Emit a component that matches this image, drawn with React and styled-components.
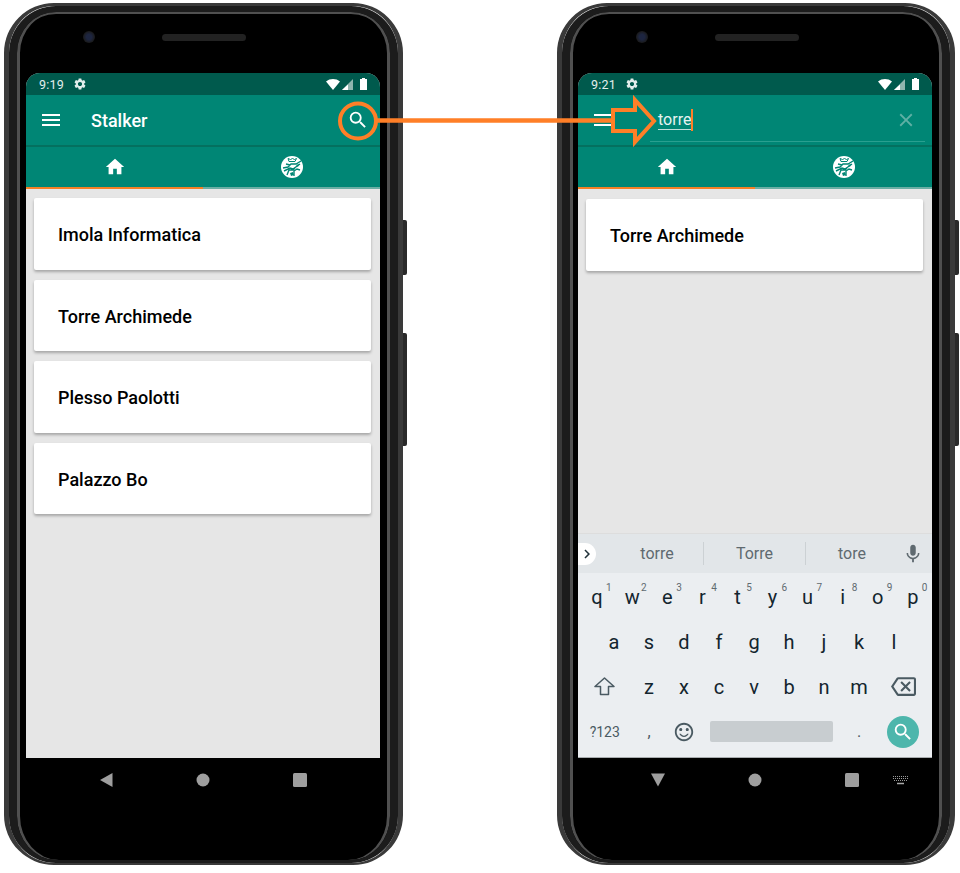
import styled, { createGlobalStyle } from 'styled-components';
import {
	MdMenu,
	MdSearch,
	MdClose,
	MdHome,
	MdSettings,
	MdMic,
	MdKeyboardArrowRight,
	MdOutlineBackspace,
	MdSentimentSatisfiedAlt,
} from 'react-icons/md';

const GlobalStyle = createGlobalStyle`
	html, body {
		margin: 0;
		padding: 0;
		background: #fff;
		font-family: Roboto, "Liberation Sans", sans-serif;
	}
`;

const Page = styled.div`
	position: relative;
	width: 960px;
	height: 873px;
	padding: 3px 0 0 4px;
	box-sizing: border-box;
	display: flex;
	align-items: flex-start;
	gap: 154px;
	overflow: hidden;
`;

const Phone = styled.div`
	width: ${(p) => p.$width}px;
	height: 862px;
	flex: none;
	box-sizing: border-box;
	display: flex;
	border-style: solid;
	border-color: #3a3a3a;
	border-width: 3px 5px 2px;
	border-radius: 50px;
`;

const Bezel = styled.div`
	position: relative;
	flex: 1;
	box-sizing: border-box;
	padding: 61px 10px 0 ${(p) => p.$left}px;
	background: #000;
	border-style: solid;
	border-color: #1c1c1c;
	border-width: 6px 8px 3px;
	border-radius: 47px;
	box-shadow:
		inset 3px 0 0 #505050,
		inset -3px 0 0 #505050,
		inset 0 2px 0 #505050;
`;

const SideButton = styled.div`
	position: absolute;
	right: -17px;
	top: ${(p) => p.$top}px;
	width: 4px;
	height: ${(p) => p.$height}px;
	background: #2a2a2a;
	border-radius: 0 2px 2px 0;
`;

const Camera = styled.div`
	position: absolute;
	left: 66px;
	top: 19px;
	width: 12px;
	height: 12px;
	border-radius: 50%;
	background: radial-gradient(circle, #1d2540 0 30%, #1a1a1a 70%);
`;

const Speaker = styled.div`
	position: absolute;
	left: 145px;
	top: 22px;
	width: 84px;
	height: 7px;
	border-radius: 4px;
	background: #222;
`;

const Screen = styled.div`
	height: 685px;
	display: flex;
	flex-direction: column;
	position: relative;
	background: #e6e6e6;
	border-radius: 14px 14px 0 0;
	overflow: hidden;
`;

const StatusBar = styled.div`
	height: 22px;
	flex: none;
	display: flex;
	align-items: center;
	gap: 9px;
	padding: 0 13px;
	background: #005a4d;
	color: #e3eeec;
	font-size: 12.5px;
	letter-spacing: 0.2px;
`;

const StatusRight = styled.div`
	margin-left: auto;
	display: flex;
	align-items: center;
	gap: 2px;
`;

const BatteryIcon = styled.svg`
	margin-left: 5px;
`;

const AppBar = styled.div`
	height: 52px;
	flex: none;
	box-sizing: border-box;
	display: flex;
	align-items: center;
	padding: 0 ${(p) => p.$right}px 0 13px;
	background: #008675;
	color: #fff;
	border-bottom: 2px solid #04705f;
`;

const Title = styled.div`
	margin-left: 28px;
	font-size: 18px;
	font-weight: 500;
`;

const BarAction = styled.div`
	margin-left: auto;
	display: flex;
	color: ${(p) => p.$color || '#fff'};
`;

const SearchField = styled.div`
	flex: 1;
	align-self: stretch;
	margin: 0 0 3px 35px;
	padding: 4px 8px 0;
	display: flex;
	align-items: center;
	border-bottom: 1px solid #2a9f8f;
`;

const SearchText = styled.span`
	font-size: 16px;
	line-height: 18px;
	color: #e6f3f1;
	border-bottom: 1px solid #bfe0da;
`;

const Caret = styled.span`
	width: 2px;
	height: 22px;
	background: #ff7f27;
`;

const Tabs = styled.div`
	height: 42px;
	flex: none;
	display: flex;
	background: #008675;
`;

const Tab = styled.div`
	flex: 1;
	display: flex;
	align-items: center;
	justify-content: center;
	color: #fff;
	border-bottom: 2px solid ${(p) => (p.$active ? '#f58025' : '#6aaea4')};
	box-sizing: border-box;
`;

const Cards = styled.div`
	flex: 1;
	display: flex;
	flex-direction: column;
	gap: 10px;
	padding: ${(p) => p.$top}px 9px 0 8px;
`;

const Card = styled.div`
	height: 71.5px;
	flex: none;
	box-sizing: border-box;
	display: flex;
	align-items: center;
	padding: 2px 0 0 24px;
	background: #fff;
	border-radius: 2px;
	box-shadow: 0 2px 3px rgba(0, 0, 0, 0.28);
	color: #000;
	font-size: 18px;
	font-weight: 500;
`;

const Keyboard = styled.div`
	flex: none;
	height: 225px;
	display: flex;
	flex-direction: column;
	background: #ebeef1;
	border-top: 1px solid #ddd;
	border-bottom: 1px solid #a8acae;
	box-sizing: border-box;
`;

const Suggestions = styled.div`
	height: 39px;
	flex: none;
	display: flex;
	align-items: center;
	margin-bottom: 1px;
	background: #e2e6e9;
	color: #5f6a70;
	font-size: 16px;
`;

const Expand = styled.div`
	width: 18px;
	height: 22px;
	flex: none;
	display: flex;
	align-items: center;
	justify-content: center;
	background: #fff;
	color: #22323a;
	border-radius: 0 11px 11px 0;
`;

const Suggestion = styled.div`
	width: ${(p) => p.$width}px;
	box-sizing: border-box;
	padding-left: ${(p) => p.$pad || 0}px;
	padding-top: 1px;
	text-align: center;
	border-right: ${(p) => (p.$last ? 'none' : '1px solid #ccd1d4')};
	line-height: 22px;
`;

const Mic = styled.div`
	margin-left: auto;
	margin-right: 8px;
	display: flex;
	color: #5f6a70;
`;

const KeyRow = styled.div`
	height: 45px;
	flex: none;
	display: flex;
	align-items: center;
	padding-left: ${(p) => p.$inset || 0}px;
`;

const Key = styled.div`
	position: relative;
	width: ${(p) => p.$width || 35}px;
	flex: none;
	display: flex;
	align-items: center;
	justify-content: center;
	color: ${(p) => p.$color || '#13252e'};
	font-size: ${(p) => p.$size || 20}px;
`;

const Digit = styled.span`
	position: absolute;
	right: 3px;
	top: -3px;
	font-size: 10px;
	color: #5f6a70;
`;

const SpaceBar = styled.div`
	width: 123px;
	height: 21px;
	background: #c8cdd0;
	border-radius: 2px;
`;

const SearchKey = styled.div`
	width: 32px;
	height: 32px;
	border-radius: 50%;
	background: #4db6ac;
	color: #fff;
	display: flex;
	align-items: center;
	justify-content: center;
`;

const NavBar = styled.div`
	position: relative;
	display: flex;
	justify-content: center;
	align-items: center;
	height: 44px;
	color: #9e9e9e;
`;

const NavSlot = styled.div`
	width: 97px;
	display: flex;
	justify-content: center;
`;

const ImeSwitch = styled.svg`
	position: absolute;
	right: 24px;
	top: 18px;
`;

const Annotation = styled.svg`
	position: absolute;
	left: 0;
	top: 0;
	pointer-events: none;
`;

const Wifi = () => (
	<svg width="14" height="11" viewBox="0 0 14 11">
		<path d="M0 2.500C4-.8 10-.8 14 2.500L7 11z" fill="#fff" />
	</svg>
);

const Signal = () => (
	<svg width="11" height="11" viewBox="0 0 11 11">
		<path d="M11 0V11H0z" fill="#8fb5ae" />
		<path d="M6 5.500V11H0z" fill="#fff" />
	</svg>
);

const Battery = () => (
	<BatteryIcon width="7" height="12" viewBox="0 0 7 12">
		<path d="M2 0h3v1h2v11H0V1h2z" fill="#fff" />
	</BatteryIcon>
);

// hat-and-coat figure of the Stalker logo, small and scratchy
const LogoIcon = () => (
	<svg width="22" height="22" viewBox="0 0 22 22">
		<circle cx="11" cy="11" r="11" fill="#fff" />
		<path d="M7 2.500l1 3h6l1.500-3-2 1-2-1-2 1z" fill="none" stroke="#008675" strokeWidth="1" />
		<path
			d="M2 12l5-1 3-3 5 0 5-3M3 15l6-3 3 1 7-5M6 19l2-5 4 0 2-2M13 20l0-5 3-2 3 1M9 9l-4-1"
			fill="none"
			stroke="#008675"
			strokeWidth="1.400"
		/>
		<path d="M9 17l3-1 1 3-3 1zM15 9l3-1-1 3z" fill="#008675" />
	</svg>
);

const ShiftIcon = () => (
	<svg width="21" height="19" viewBox="0 0 21 19">
		<path d="M10.500 1L1 9.500h5.500v8h8v-8H20z" fill="none" stroke="#4a5a62" strokeWidth="1.500" strokeLinejoin="round" />
	</svg>
);

const Nav = ({ back }) => (
	<NavBar>
		<NavSlot>
			<svg width="16" height="16" viewBox="0 0 16 16">
				{back === 'down' ? <path d="M1 1.500h14L8 14.500z" fill="#9e9e9e" /> : <path d="M14.500 1v14L2 8z" fill="#9e9e9e" />}
			</svg>
		</NavSlot>
		<NavSlot>
			<svg width="14" height="14" viewBox="0 0 14 14">
				<circle cx="7" cy="7" r="6.500" fill="#9e9e9e" />
			</svg>
		</NavSlot>
		<NavSlot>
			<svg width="14" height="14" viewBox="0 0 14 14">
				<rect width="14" height="14" rx="1.500" fill="#9e9e9e" />
			</svg>
		</NavSlot>
		{back === 'down' && (
			<ImeSwitch width="15" height="9" viewBox="0 0 15 9">
				<path d="M0 .5H15M0 2.500H15M1 4.500H14" stroke="#999" strokeDasharray="1 1" />
				<path d="M4 7.500H11" stroke="#aaa" strokeWidth="1.500" />
			</ImeSwitch>
		)}
	</NavBar>
);

const Status = ({ time }) => (
	<StatusBar>
		<span>{time}</span>
		<MdSettings size={14} />
		<StatusRight>
			<Wifi />
			<Signal />
			<Battery />
		</StatusRight>
	</StatusBar>
);

const TabStrip = () => (
	<Tabs>
		<Tab $active>
			<MdHome size={22} />
		</Tab>
		<Tab>
			<LogoIcon />
		</Tab>
	</Tabs>
);

const PhoneBody = ({ width, left, children }) => (
	<Phone $width={width}>
		<Bezel $left={left}>
			<Camera />
			<Speaker />
			<SideButton $top={208} $height={55} />
			<SideButton $top={321} $height={113} />
			{children}
		</Bezel>
	</Phone>
);

const ROW_1 = [
	['q', 1],
	['w', 2],
	['e', 3],
	['r', 4],
	['t', 5],
	['y', 6],
	['u', 7],
	['i', 8],
	['o', 9],
	['p', 0],
];

const places = ['Imola Informatica', 'Torre Archimede', 'Plesso Paolotti', 'Palazzo Bo'];

export default function App() {
	return (
		<Page>
			<GlobalStyle />
			<PhoneBody width={399} left={9}>
				<Screen>
					<Status time="9:19" />
					<AppBar $right={11}>
						<MdMenu size={24} />
						<Title>Stalker</Title>
						<BarAction>
							<MdSearch size={22} />
						</BarAction>
					</AppBar>
					<TabStrip />
					<Cards $top={9}>
						{places.map((name) => (
							<Card key={name}>{name}</Card>
						))}
					</Cards>
				</Screen>
				<Nav back="left" />
			</PhoneBody>
			<PhoneBody width={398} left={8}>
				<Screen>
					<Status time="9:21" />
					<AppBar $right={7}>
						<MdMenu size={24} />
						<SearchField>
							<SearchText>torre</SearchText>
							<Caret />
							<BarAction $color="#5fb0a5">
								<MdClose size={22} />
							</BarAction>
						</SearchField>
					</AppBar>
					<TabStrip />
					<Cards $top={10}>
						<Card>Torre Archimede</Card>
					</Cards>
					<Keyboard>
						<Suggestions>
							<Expand>
								<MdKeyboardArrowRight size={18} />
							</Expand>
							<Suggestion $width={108} $pad={15}>torre</Suggestion>
							<Suggestion $width={102}>Torre</Suggestion>
							<Suggestion $width={92} $last>tore</Suggestion>
							<Mic>
								<MdMic size={22} />
							</Mic>
						</Suggestions>
						<KeyRow $inset={1.5}>
							{ROW_1.map(([letter, digit]) => (
								<Key key={letter} $width={35.1}>
									{letter}
									<Digit>{digit}</Digit>
								</Key>
							))}
						</KeyRow>
						<KeyRow $inset={18.5}>
							{'asdfghjkl'.split('').map((letter) => (
								<Key key={letter}>{letter}</Key>
							))}
						</KeyRow>
						<KeyRow>
							<Key $width={53.5}>
								<ShiftIcon />
							</Key>
							{'zxcvbnm'.split('').map((letter) => (
								<Key key={letter}>{letter}</Key>
							))}
							<Key $width={53.5} $color="#4a5a62">
								<MdOutlineBackspace size={25} />
							</Key>
						</KeyRow>
						<KeyRow>
							<Key $width={53.5} $size={14} $color="#4a5a62">
								?123
							</Key>
							<Key $color="#4a5a62" $size={16}>
								,
							</Key>
							<Key $color="#4a5a62">
								<MdSentimentSatisfiedAlt size={22} />
							</Key>
							<Key $width={140}>
								<SpaceBar />
							</Key>
							<Key $color="#4a5a62" $size={16}>
								.
							</Key>
							<Key $width={53.5}>
								<SearchKey>
									<MdSearch size={22} />
								</SearchKey>
							</Key>
						</KeyRow>
					</Keyboard>
				</Screen>
				<Nav back="down" />
			</PhoneBody>
			<Annotation width="960" height="873" viewBox="0 0 960 873">
				<ellipse cx="358" cy="121" rx="18" ry="17.500" fill="none" stroke="#ff7f27" strokeWidth="4" />
				<path d="M377 120.500H613" fill="none" stroke="#ff7f27" strokeWidth="4.500" />
				<path d="M613 110H635V100L654 121L635 142V131H613z" fill="none" stroke="#ff7f27" strokeWidth="4" />
			</Annotation>
		</Page>
	);
}
